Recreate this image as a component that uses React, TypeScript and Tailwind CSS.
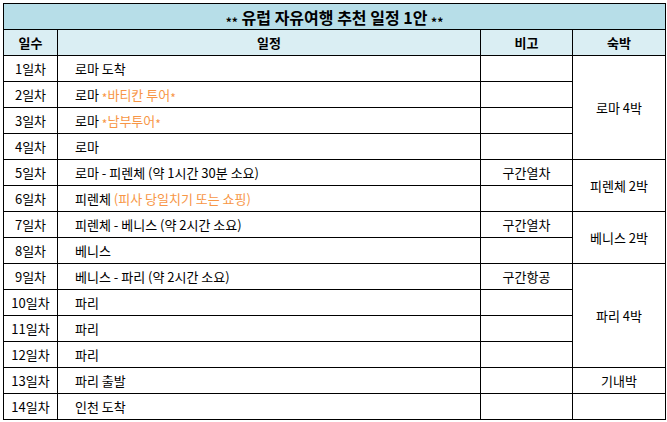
import React from "react";

type Row = {
  day: string;
  plan: React.ReactNode;
  note?: string;
  stay?: { text: string; span: number };
};

const orange = "text-[#f79646]";

// Malgun-style asterisk: small and sitting at mid height
const Star = ({ s = "*" }: { s?: string }) => (
  <span className="relative top-[3px] text-[12px]">{s}</span>
);

const rows: Row[] = [
  { day: "1일차", plan: "로마 도착", stay: { text: "로마 4박", span: 4 } },
  {
    day: "2일차",
    plan: (
      <>
        로마 <span className={orange}><Star />바티칸 투어<Star /></span>
      </>
    ),
  },
  {
    day: "3일차",
    plan: (
      <>
        로마 <span className={orange}><Star />남부투어<Star /></span>
      </>
    ),
  },
  { day: "4일차", plan: "로마" },
  { day: "5일차", plan: "로마 - 피렌체 (약 1시간 30분 소요)", note: "구간열차", stay: { text: "피렌체 2박", span: 2 } },
  { day: "6일차", plan: <>피렌체 <span className={orange}>(피사 당일치기 또는 쇼핑)</span></> },
  { day: "7일차", plan: "피렌체 - 베니스 (약 2시간 소요)", note: "구간열차", stay: { text: "베니스 2박", span: 2 } },
  { day: "8일차", plan: "베니스" },
  { day: "9일차", plan: "베니스 - 파리 (약 2시간 소요)", note: "구간항공", stay: { text: "파리 4박", span: 4 } },
  { day: "10일차", plan: "파리" },
  { day: "11일차", plan: "파리" },
  { day: "12일차", plan: "파리" },
  { day: "13일차", plan: "파리 출발", stay: { text: "기내박", span: 1 } },
  { day: "14일차", plan: "인천 도착", stay: { text: "", span: 1 } },
];

const cell = "border border-black p-0";

export default function App() {
  return (
    <div className="bg-white w-[667px] h-[422px] pt-[3px] pl-[3px] font-['Noto_Sans_CJK_KR','Noto_Sans',sans-serif] text-[13px] text-black">
      <table className="table-fixed border-collapse w-[662px]">
        <colgroup>
          <col className="w-[54px]" />
          <col className="w-[423px]" />
          <col className="w-[92px]" />
          <col className="w-[93px]" />
        </colgroup>
        <thead>
          <tr className="h-[26px]">
            <th colSpan={4} className={`${cell} bg-[#b7dee8] text-[16px] font-bold text-center`}>
              <Star s="**" /> 유럽 자유여행 추천 일정 1안 <Star s="**" />
            </th>
          </tr>
          <tr className="h-[26px] bg-[#daeef3]">
            <th className={`${cell} font-bold`}>일수</th>
            <th className={`${cell} font-bold`}>일정</th>
            <th className={`${cell} font-bold`}>비고</th>
            <th className={`${cell} font-bold`}>숙박</th>
          </tr>
        </thead>
        <tbody>
          {rows.map((r) => (
            <tr key={r.day} className="h-[26px]">
              <td className={`${cell} text-center`}>{r.day}</td>
              <td className={`${cell} pl-[17px] text-left`}>{r.plan}</td>
              <td className={`${cell} text-center`}>{r.note ?? ""}</td>
              {r.stay && (
                <td rowSpan={r.stay.span} className={`${cell} text-center align-middle`}>
                  {r.stay.text}
                </td>
              )}
            </tr>
          ))}
        </tbody>
      </table>
    </div>
  );
}
